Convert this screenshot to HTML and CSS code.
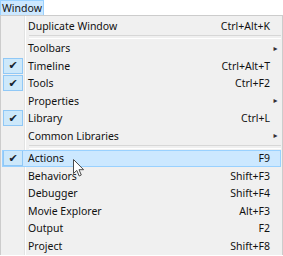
FILE: index.html
```html
<!DOCTYPE html>
<html lang="en">
<head>
  <meta charset="UTF-8" />
  <title>Window menu</title>
  <link rel="stylesheet" href="styles.css">
</head>
<body>

  <div class="menubar">
    <span class="menubar-title">Window</span>
  </div>

  <div class="menu">
    <div class="item"><span class="gutter"></span><span class="label">Duplicate Window</span><span class="key">Ctrl+Alt+K</span><span class="arrow"></span></div>
    <div class="sep"></div>
    <div class="item"><span class="gutter"></span><span class="label">Toolbars</span><span class="key"></span><span class="arrow">&#9656;</span></div>
    <div class="item"><span class="gutter"><span class="check">&#10004;</span></span><span class="label">Timeline</span><span class="key">Ctrl+Alt+T</span><span class="arrow"></span></div>
    <div class="item"><span class="gutter"><span class="check">&#10004;</span></span><span class="label">Tools</span><span class="key">Ctrl+F2</span><span class="arrow"></span></div>
    <div class="item"><span class="gutter"></span><span class="label">Properties</span><span class="key"></span><span class="arrow">&#9656;</span></div>
    <div class="item"><span class="gutter"><span class="check">&#10004;</span></span><span class="label">Library</span><span class="key">Ctrl+L</span><span class="arrow"></span></div>
    <div class="item"><span class="gutter"></span><span class="label">Common Libraries</span><span class="key"></span><span class="arrow">&#9656;</span></div>
    <div class="sep"></div>
    <div class="item active"><span class="gutter"><span class="check">&#10004;</span></span><span class="label">Actions</span><span class="key">F9</span><span class="arrow"></span>
      <!-- mouse pointer -->
      <svg class="cursor" width="12" height="18" viewBox="0 0 12 18">
        <path d="M0.5 0.5 L0.5 14.5 L3.8 11.4 L6.2 17 L8.3 16 L6 10.7 L10.6 10.7 Z" fill="#fff" stroke="#4a4a4a" stroke-width="1" stroke-linejoin="round"/>
      </svg>
    </div>
    <div class="item"><span class="gutter"></span><span class="label">Behaviors</span><span class="key">Shift+F3</span><span class="arrow"></span></div>
    <div class="item"><span class="gutter"></span><span class="label">Debugger</span><span class="key">Shift+F4</span><span class="arrow"></span></div>
    <div class="item"><span class="gutter"></span><span class="label">Movie Explorer</span><span class="key">Alt+F3</span><span class="arrow"></span></div>
    <div class="item"><span class="gutter"></span><span class="label">Output</span><span class="key">F2</span><span class="arrow"></span></div>
    <div class="item"><span class="gutter"></span><span class="label">Project</span><span class="key">Shift+F8</span><span class="arrow"></span></div>
  </div>

</body>
</html>
```

FILE: styles.css
```css
* {
  box-sizing: border-box;
}

body {
  margin: 0;
  background: #ffffff;
  font-family: "Noto Sans", "Open Sans", sans-serif;
  font-size: 10.5px;
  color: #111;
  width: 283px;
  height: 256px;
  overflow: hidden;
}

.menubar {
  height: 15px;
  display: flex;
}

.menubar-title {
  display: flex;
  align-items: center;
  justify-content: center;
  width: 44px;
  height: 15px;
  background: #cce8ff;
  border: 1px solid #99d1ff;
  border-bottom: none;
  color: #111;
}

.menu {
  width: 283px;
  border: 1px solid #cccccc;
  border-bottom: none;
  padding-top: 1px;
  /* gutter line to the right of the check column */
  background:
    linear-gradient(to right,
      #f0f0f0 0, #f0f0f0 23px,
      #e2e3e3 23px, #e2e3e3 24px,
      #ffffff 24px, #ffffff 25px,
      #f0f0f0 25px);
  position: relative;
}

.item {
  position: relative;
  display: flex;
  align-items: center;
  height: 17.5px;
  margin: 0 1px;
}

.item.active {
  background: #cce8ff;
  outline: 1px solid #99d1ff;
  outline-offset: -1px;
}

.gutter {
  width: 26px;
  height: 100%;
  display: flex;
  align-items: center;
  padding-left: 1px;
  flex-shrink: 0;
}

.check {
  width: 20px;
  height: 16px;
  display: flex;
  align-items: center;
  justify-content: center;
  background: #cde8fa;
  border: 1px solid #90c8f6;
  font-size: 11px;
  color: #16222e;
  font-family: "DejaVu Sans", sans-serif;
}

.label {
  flex: 1;
  white-space: nowrap;
}

.key {
  text-align: right;
  white-space: nowrap;
}

.arrow {
  width: 11px;
  text-align: center;
  font-size: 8px;
  color: #333;
  font-family: "DejaVu Sans", sans-serif;
}

.sep {
  height: 5px;
  display: flex;
  align-items: center;
  padding-left: 28px;
  padding-right: 1px;
}

.sep::before {
  content: "";
  display: block;
  width: 100%;
  height: 2px;
  border-top: 1px solid #d7d7d7;
  border-bottom: 1px solid #ffffff;
}

.cursor {
  position: absolute;
  left: 71px;
  top: 9px;
}
```
